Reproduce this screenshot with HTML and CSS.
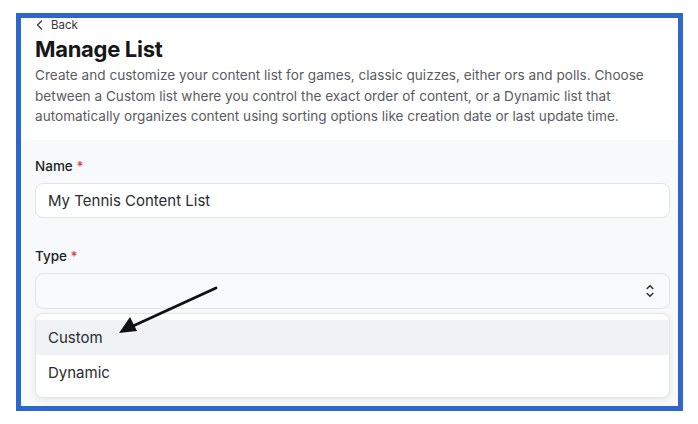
FILE: index.html
```html
<!DOCTYPE html>
<html lang="en">
<head>
  <meta charset="UTF-8" />
  <meta name="viewport" content="width=device-width, initial-scale=1.0" />
  <title>Manage List</title>
  <link rel="stylesheet" href="styles.css">
</head>
<body>
  <div id="frame">
    <div id="header">
      <a class="back" href="#">
        <svg class="back-icon" width="7" height="10" viewBox="0 0 7 10">
          <path d="M5.5 1 L1.5 5 L5.5 9" fill="none" stroke="#333" stroke-width="1.2" stroke-linecap="round" stroke-linejoin="round"/>
        </svg>
        Back
      </a>
      <h1>Manage List</h1>
      <p class="intro">Create and customize your content list for games, classic quizzes, either ors and polls. Choose between a Custom list where you control the exact order of content, or a Dynamic list that automatically organizes content using sorting options like creation date or last update time.</p>
    </div>

    <div id="form">
      <label class="field-label">Name <span class="req">*</span></label>
      <div class="input">My Tennis Content List</div>

      <label class="field-label type-label">Type <span class="req">*</span></label>
      <div class="select">
        <svg class="updown" width="10" height="16" viewBox="0 0 10 16">
          <path d="M2.2 5.5 L5 2.7 L7.8 5.5" fill="none" stroke="#333" stroke-width="1.6" stroke-linecap="round" stroke-linejoin="round"/>
          <path d="M2.2 10.5 L5 13.3 L7.8 10.5" fill="none" stroke="#333" stroke-width="1.6" stroke-linecap="round" stroke-linejoin="round"/>
        </svg>
      </div>

      <div class="menu">
        <div class="option active">Custom</div>
        <div class="option">Dynamic</div>
      </div>
    </div>

    <!-- annotation arrow pointing at the Custom option -->
    <svg class="pointer" width="110" height="60" viewBox="0 0 110 60">
      <line x1="100" y1="4" x2="17" y2="42" stroke="#111" stroke-width="2.8" stroke-linecap="round"/>
      <polygon points="3,49 14,33 21,47" fill="#111"/>
    </svg>
  </div>
</body>
</html>
```

FILE: styles.css
```css
* {
  box-sizing: border-box;
}

body {
  margin: 0;
  background: #fff;
  font-family: Inter, 'Noto Sans', sans-serif;
  color: #1d1f23;
}

#frame {
  position: relative;
  width: 667px;
  height: 398px;
  margin: 13px 0 0 16px;
  border: 5px solid #2e66cb;
  overflow: hidden;
  background: #fff;
}

#header {
  padding: 0 20px 0 14px;
  height: 122px;
}

.back {
  display: flex;
  align-items: center;
  gap: 8px;
  font-size: 11.5px;
  line-height: 14px;
  color: #333;
  text-decoration: none;
  padding-left: 1px;
}

h1 {
  margin: 3px 0 0;
  font-size: 22px;
  line-height: 28px;
  font-weight: 700;
  letter-spacing: -0.3px;
  color: #161719;
}

.intro {
  margin: 2px 0 0;
  font-size: 13.6px;
  line-height: 20.5px;
  color: #595b60;
}

#form {
  background: #f8f9fb;
  height: 100%;
  padding: 17px 8px 0 14px;
}

.field-label {
  display: block;
  font-size: 13.5px;
  line-height: 18px;
  font-weight: 500;
  color: #1d1f23;
}

.req {
  color: #d33a3a;
}

.input {
  margin-top: 8px;
  height: 35px;
  background: #fff;
  border: 1px solid #e1e3e7;
  border-radius: 8px;
  padding: 0 12px;
  font-size: 15px;
  line-height: 33px;
  color: #2a2c30;
}

.type-label {
  margin-top: 29px;
}

.select {
  margin-top: 8px;
  height: 36px;
  background: #f9fafb;
  border: 1px solid #e1e3e7;
  border-radius: 8px;
  display: flex;
  align-items: center;
  justify-content: flex-end;
  padding-right: 14px;
}

.menu {
  margin-top: 4px;
  background: #fff;
  border: 1px solid #e4e6ea;
  border-radius: 8px;
  padding: 6px 0 7px;
  box-shadow: 0 2px 6px rgba(0, 0, 0, 0.08);
}

.option {
  height: 35px;
  line-height: 36px;
  padding: 0 12px;
  font-size: 15px;
  color: #2a2c30;
}

.option.active {
  background: #f0f2f5;
}

.pointer {
  position: absolute;
  left: 95px;
  top: 266px;
}
```
